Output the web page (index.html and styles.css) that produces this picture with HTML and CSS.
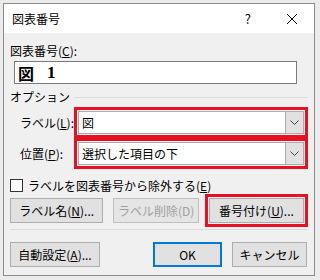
FILE: index.html
```html
<!DOCTYPE html>
<html lang="ja">
<head>
<meta charset="utf-8">
<link rel="stylesheet" href="styles.css">
</head>
<body>
<div class="window">
  <div class="titlebar">
    <span class="title">図表番号</span>
    <span class="help">?</span>
    <svg class="close" width="12" height="12" viewBox="0 0 12 12"><path d="M1 1 L11 11 M11 1 L1 11" stroke="#000" stroke-width="1"/></svg>
  </div>
  <div class="body">
    <div class="caption-label">図表番号(<u>C</u>):</div>
    <div class="caption-input"><span class="cap-fig">図</span><span class="cap-num">1</span></div>
    <div class="group">
      <span class="group-label">オプション</span>
      <span class="group-line"></span>
    </div>
    <div class="field-row">
      <span class="field-label">ラベル(<u>L</u>):</span>
      <div class="red-box">
        <div class="combo"><span class="combo-text">図</span><span class="combo-btn"><svg width="9" height="5" viewBox="0 0 9 5"><path d="M0.5 0.5 L4.5 4.5 L8.5 0.5" fill="none" stroke="#444" stroke-width="1"/></svg></span></div>
      </div>
    </div>
    <div class="field-row">
      <span class="field-label">位置(<u>P</u>):</span>
      <div class="red-box">
        <div class="combo"><span class="combo-text">選択した項目の下</span><span class="combo-btn"><svg width="9" height="5" viewBox="0 0 9 5"><path d="M0.5 0.5 L4.5 4.5 L8.5 0.5" fill="none" stroke="#444" stroke-width="1"/></svg></span></div>
      </div>
    </div>
    <label class="check-row"><span class="checkbox"></span><span>ラベルを図表番号から除外する(<u>E</u>)</span></label>
    <div class="btn-row">
      <span class="btn btn-name">ラベル名(<u>N</u>)...</span>
      <span class="btn btn-del disabled">ラベル削除(D)</span>
      <span class="red-btn"><span class="btn btn-num">番号付け(<u>U</u>)...</span></span>
    </div>
    <div class="sep"></div>
    <div class="bottom-row">
      <span class="btn btn-auto">自動設定(<u>A</u>)...</span>
      <span class="btn btn-ok">OK</span>
      <span class="btn btn-cancel">キャンセル</span>
    </div>
  </div>
</div>
</body>
</html>
```
FILE: styles.css
```css
html, body {
  margin: 0;
  padding: 0;
}
body {
  width: 320px;
  height: 280px;
  background: #ebebeb;
  font-family: "Noto Sans CJK JP", "Noto Sans", sans-serif;
  font-size: 12px;
  color: #000;
  overflow: hidden;
}
u { text-decoration: underline; text-underline-offset: 1px; }
.window {
  margin: 3px 0 0 3px;
  width: 310px;
  height: 271px;
  border: 1px solid #8c8c8c;
  background: #f0f0f0;
  display: flex;
  flex-direction: column;
}
.titlebar {
  height: 29px;
  background: #fff;
  display: flex;
  align-items: center;
  padding-left: 8px;
}
.title { flex: 1; font-size: 12px; }
.help { font-size: 13px; margin-right: 35px; }
.close { margin-right: 16px; }
.body {
  flex: 1;
  padding: 0 6px;
  display: flex;
  flex-direction: column;
}
.caption-label {
  margin-top: 9px;
  line-height: 17px;
  height: 17px;
  white-space: nowrap;
}
.caption-input {
  margin: 2px 0 0 4px;
  width: 281px;
  height: 21px;
  border: 1px solid #7a7a7a;
  background: #fff;
  display: flex;
  align-items: center;
  font-family: "Liberation Serif", "Noto Serif CJK JP", "Noto Sans CJK JP", serif;
  font-weight: bold;
  font-size: 17px;
}
.cap-fig { margin-left: 3px; font-family: "Noto Sans CJK JP", sans-serif; font-weight: bold; font-size: 16px; }
.cap-num { margin-left: 13px; }
.group {
  display: flex;
  align-items: center;
  margin-top: 3px;
  height: 20px;
}
.group-label { line-height: 16px; white-space: nowrap; }
.group-line {
  flex: 1;
  height: 1px;
  background: #dcdcdc;
  margin-left: 4px;
}
.field-row {
  display: flex;
  align-items: center;
  height: 31px;
}
.field-label {
  width: 64px;
  flex: none;
  padding-left: 10px;
  box-sizing: border-box;
  white-space: nowrap;
}
.red-box {
  border: 3px solid #e81123;
  padding: 1px;
  width: 230px;
  height: 23px;
}
.combo {
  height: 21px;
  border: 1px solid #acacac;
  background: #fff;
  display: flex;
  align-items: stretch;
}
.combo-text { flex: 1; padding-left: 3px; line-height: 21px; }
.combo-btn {
  width: 17px;
  background: #e1e1e1;
  border-left: 1px solid #acacac;
  display: flex;
  align-items: center;
  justify-content: center;
}
.check-row {
  display: flex;
  align-items: center;
  height: 18px;
  margin-top: 7px;
  white-space: nowrap;
}
.checkbox {
  width: 11px;
  height: 11px;
  border: 1px solid #333;
  background: #fff;
  margin-right: 5px;
  flex: none;
}
.btn-row {
  display: flex;
  align-items: center;
  height: 33px;
}
.btn {
  display: flex;
  align-items: center;
  justify-content: center;
  height: 23px;
  border: 1px solid #adadad;
  background: #e1e1e1;
  box-sizing: content-box;
  white-space: nowrap;
}
.btn-name { width: 93px; }
.btn-del { width: 85px; margin-left: 10px; color: #a0a0a0; border-color: #bfbfbf; background: #e5e5e5; }
.red-btn {
  margin-left: 6px;
  border: 3px solid #e81123;
  padding: 1px;
}
.btn-num { width: 93px; }
.sep {
  height: 1px;
  background: #dcdcdc;
  margin-top: 2px;
}
.bottom-row {
  display: flex;
  align-items: center;
  margin-top: 12px;
}
.btn-auto { width: 88px; }
.btn-ok { width: 65px; margin-left: 53px; border: 2px solid #0078d7; height: 21px; }
.btn-cancel { width: 73px; margin-left: 10px; }
```
